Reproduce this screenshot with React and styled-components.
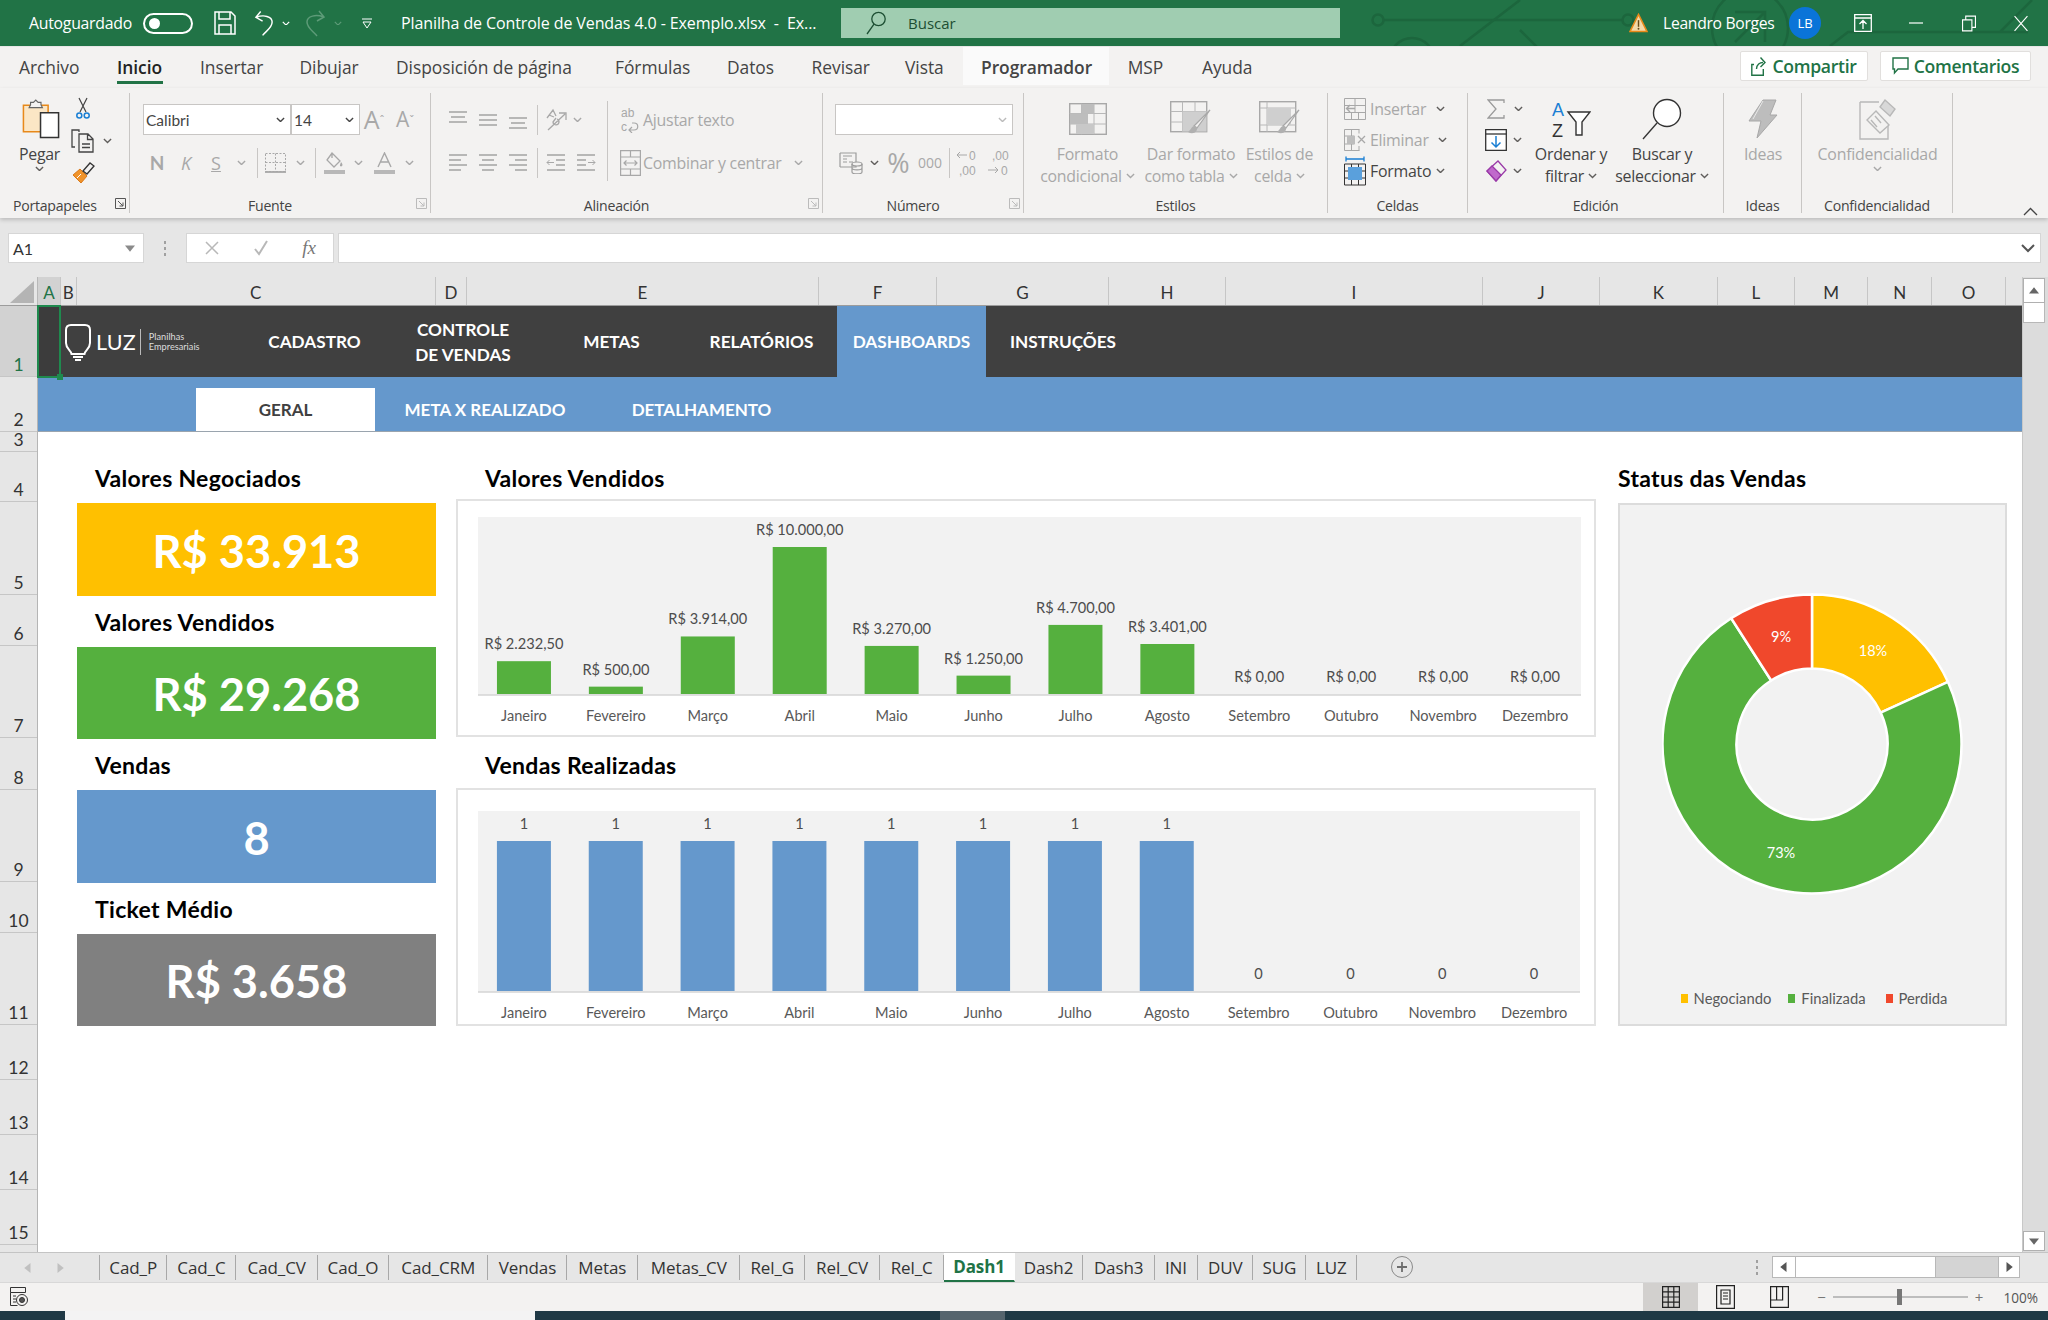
import React from 'react';
import styled, { createGlobalStyle } from 'styled-components';

const UI = `"Open Sans","Noto Sans",sans-serif`;
const CAL = `Lato,"Liberation Sans",sans-serif`;
const LIB = `"Liberation Sans",sans-serif`;
const GR = '#a8a8a8';
const DK = '#444';

const Global = createGlobalStyle`
  html,body{margin:0;padding:0;width:2048px;height:1320px;overflow:hidden;background:#fff;}
  *{box-sizing:border-box;}
`;
const Page = styled.div`width:2048px;height:1320px;display:flex;flex-direction:column;font-family:${UI};overflow:hidden;`;

/* ---------- generic slots ---------- */
const Slot = styled.div`
  flex:none;width:${p=>p.$w}px;margin-left:${p=>p.$ml||0}px;display:flex;align-items:center;justify-content:center;
  height:100%;white-space:nowrap;
`;
const Sep = styled.div`flex:none;width:1px;height:${p=>p.$h||26}px;background:#c8c6c4;margin:0 ${p=>p.$m||0}px;`;

/* ---------- title bar ---------- */
const TitleBar = styled.div`position:relative;flex:none;height:46px;background:#217346;display:flex;align-items:center;color:#fff;padding-left:29px;font-size:15px;`;
const Circuit = styled.svg`position:absolute;left:1360px;top:0;`;
const TitleRow = styled.div`position:relative;display:flex;align-items:center;height:100%;`;
const AutoLabel = styled.div`flex:none;width:114px;font-size:15.8px;letter-spacing:-.25px;white-space:nowrap;`;
const Toggle = styled.div`flex:none;width:50px;height:21px;border:2px solid #fff;border-radius:11px;display:flex;align-items:center;padding-left:4px;`;
const ToggleDot = styled.div`width:11px;height:11px;border-radius:50%;background:#fff;`;
const DocTitle = styled.div`flex:none;width:414px;margin-left:10px;font-size:16px;white-space:nowrap;letter-spacing:-.1px;`;
const SearchBox = styled.div`flex:none;width:499px;height:30px;margin-left:26px;background:#a0cdb1;display:flex;align-items:center;padding-left:25px;color:#1d4f33;font-size:15px;gap:22px;`;
const UserName = styled.div`flex:none;width:112px;margin-left:15px;font-size:15.7px;white-space:nowrap;letter-spacing:-.3px;`;
const Avatar = styled.div`flex:none;width:32px;height:32px;border-radius:50%;background:#0a74d8;margin-left:14px;display:flex;align-items:center;justify-content:center;font-size:13px;color:#fff;`;

/* ---------- ribbon tabs ---------- */
const TabsBar = styled.div`flex:none;height:42px;background:#f3f2f1;border-top:1px solid #e6e6e6;display:flex;align-items:flex-start;padding-left:19px;`;
const RibbonTab = styled.div`
  flex:none;position:relative;width:${p=>p.$w}px;height:38px;padding-left:${p=>p.$pl||0}px;font-size:17.4px;line-height:40px;color:${p=>p.$on?'#222':'#444'};
  font-weight:${p=>p.$on||p.$sel?600:400};background:${p=>p.$sel?'#fafafa':'transparent'};white-space:nowrap;letter-spacing:-.05px;
`;
const TabLine = styled.div`position:absolute;left:0;top:34px;width:46px;height:3px;background:#217346;`;
const ShareRow = styled.div`margin-left:auto;display:flex;gap:12px;padding:4px 17px 0 0;`;
const ShareBtn = styled.div`width:${p=>p.$w}px;height:30px;background:#fff;border:1px solid #e1dfdd;border-radius:2px;display:flex;align-items:center;justify-content:center;gap:5px;color:#217346;font-size:17.6px;font-weight:600;letter-spacing:-.3px;white-space:nowrap;`;

/* ---------- ribbon ---------- */
const Ribbon = styled.div`position:relative;z-index:2;flex:none;height:130px;background:#f3f2f1;display:flex;padding-top:5px;box-shadow:0 2px 4px rgba(0,0,0,.18);`;
const Group = styled.div`flex:none;width:${p=>p.$w}px;height:120px;border-right:1px solid #c8c6c4;display:flex;flex-direction:column;`;
const GroupBody = styled.div`flex:1;display:flex;min-height:0;padding-left:${p=>p.$pl||0}px;`;
const GroupLabel = styled.div`
  flex:none;height:24px;padding-top:9px;position:relative;text-align:${p=>p.$left?'left':'center'};padding-left:${p=>p.$left?13:0}px;padding-right:${p=>p.$lp?20:0}px;
  font-size:14.1px;line-height:15px;color:#444;letter-spacing:-.25px;white-space:nowrap;
`;
const Launcher = styled.svg`position:absolute;right:3px;top:9px;`;
const Col = styled.div`display:flex;flex-direction:column;flex:none;width:${p=>p.$w?p.$w+'px':'auto'};padding-top:${p=>p.$pt||0}px;`;
const ToolRow = styled.div`display:flex;align-items:center;flex:none;height:${p=>p.$h||31}px;margin-bottom:${p=>p.$mb||0}px;`;
const PasteCol = styled.div`flex:none;width:71px;padding-left:8px;display:flex;flex-direction:column;align-items:center;`;
const LargeBtn = styled.div`flex:none;width:${p=>p.$w}px;display:flex;flex-direction:column;align-items:center;color:${p=>p.$dim?GR:DK};font-size:15.9px;line-height:21.5px;letter-spacing:-.25px;white-space:nowrap;`;
const LargeIcon = styled.div`flex:none;height:51px;display:flex;align-items:center;justify-content:center;margin-left:${p=>p.$ml||0}px;`;
const TextRow = styled.div`display:flex;align-items:center;gap:4px;`;
const DimText = styled.span`font-size:15.9px;color:${p=>p.$on?DK:GR};letter-spacing:-.25px;white-space:nowrap;`;
const SelectBox = styled.div`flex:none;width:${p=>p.$w}px;height:31px;background:#fff;border:1px solid #c8c6c4;display:flex;align-items:center;justify-content:space-between;padding:0 5px 0 2px;font-family:${CAL};font-size:15.5px;color:#444;`;
const BigA = styled.span`font-size:${p=>p.$s}px;color:${GR};font-weight:${p=>p.$b?700:400};font-style:${p=>p.$i?'italic':'normal'};text-decoration:${p=>p.$u?'underline':'none'};font-family:${p=>p.$c?CAL:UI};line-height:1;`;
const VDiv = styled.div`flex:none;width:1px;height:80px;background:#c8c6c4;margin:8px 0 0 0;`;
const AlignLeft = styled.div`flex:none;width:164px;`;
const AlignRight = styled.div`flex:none;padding-left:9px;`;
const Collapse = styled.div`margin-left:auto;padding:106px 10px 0 0;`;

/* ---------- formula bar ---------- */
const FormulaBar = styled.div`flex:none;height:59px;background:#e6e6e6;display:flex;align-items:flex-start;padding:15px 7px 0 8px;`;
const NameBox = styled.div`flex:none;width:136px;height:30px;background:#fff;border:1px solid #d6d6d6;display:flex;align-items:center;justify-content:space-between;padding:0 8px 0 4px;font-family:${CAL};font-size:16px;color:#333;`;
const Dots = styled.div`flex:none;width:42px;display:flex;flex-direction:column;align-items:center;gap:3px;padding-top:8px;`;
const Dot = styled.div`width:2px;height:3px;background:#a0a0a0;`;
const FxBox = styled.div`flex:none;width:148px;height:30px;background:#fff;border:1px solid #d6d6d6;display:flex;align-items:center;`;
const FxText = styled.span`font-family:"Liberation Serif",serif;font-style:italic;font-size:19px;color:#777;`;
const FormulaInput = styled.div`flex:1;height:30px;margin-left:4px;background:#fff;border:1px solid #d6d6d6;display:flex;align-items:center;justify-content:flex-end;padding-right:5px;`;

/* ---------- sheet ---------- */
const Sheet = styled.div`flex:1;min-height:0;display:flex;background:#fff;`;
const SheetMain = styled.div`flex:none;width:2022px;display:flex;flex-direction:column;`;
const ColHeader = styled.div`flex:none;height:29px;display:flex;background:#e6e6e6;border-bottom:1px solid #9c9c9c;`;
const Corner = styled.div`flex:none;width:38px;height:100%;display:flex;align-items:flex-end;justify-content:flex-end;padding:0 3px 2px 0;border-right:1px solid #b8b8b8;`;
const ColCell = styled.div`
  flex:none;width:${p=>p.$w}px;height:100%;border-right:1px solid #c6c6c6;display:flex;align-items:flex-end;justify-content:center;
  font-family:${CAL};font-size:17px;line-height:24px;color:${p=>p.$on?'#217346':'#333'};background:${p=>p.$on?'#d2d2d2':'transparent'};
`;
const SheetBody = styled.div`flex:1;min-height:0;display:flex;position:relative;`;
const RowHeader = styled.div`flex:none;width:38px;background:#e6e6e6;border-right:1px solid #b5b5b5;overflow:hidden;`;
const RowCell = styled.div`
  height:${p=>p.$h}px;border-bottom:1px solid #c6c6c6;display:flex;align-items:flex-end;justify-content:center;padding-bottom:2px;
  font-family:${CAL};font-size:17.5px;line-height:18px;color:${p=>p.$on?'#217346':'#333'};background:${p=>p.$on?'#d2d2d2':'transparent'};
`;
const Content = styled.div`flex:1;min-width:0;display:flex;flex-direction:column;`;
const SelectedCell = styled.div`position:absolute;left:37px;top:-1px;width:24px;height:73px;border:2px solid #1f8a4e;background:rgba(0,0,0,.06);`;
const Handle = styled.div`position:absolute;right:-4px;bottom:-4px;width:6px;height:6px;background:#1f8a4e;`;

const Nav = styled.div`flex:none;height:71px;background:#404040;display:flex;color:#fff;font-family:${CAL};font-weight:700;font-size:17.2px;`;
const LogoSlot = styled.div`flex:none;width:215px;display:flex;align-items:center;padding-left:27px;`;
const LogoLuz = styled.span`font-weight:400;font-size:21.5px;margin-left:5px;letter-spacing:.2px;`;
const LogoBar = styled.div`width:1px;height:26px;background:#bbb;margin:0 8px 0 4px;`;
const LogoSmall = styled.div`font-weight:400;font-size:9.2px;line-height:9.5px;color:#ddd;`;
const NavItem = styled.div`
  flex:none;width:${p=>p.$w}px;margin-left:${p=>p.$ml||0}px;display:flex;align-items:center;justify-content:center;text-align:center;line-height:25px;
  background:${p=>p.$on?'#6598cc':'transparent'};white-space:pre-line;
`;
const SubNav = styled.div`flex:none;height:55px;background:#6598cc;border-bottom:1px solid #9aa4ae;display:flex;align-items:flex-end;padding-left:158px;color:#fff;font-family:${CAL};font-weight:700;font-size:17px;`;
const SubTab = styled.div`flex:none;width:${p=>p.$w}px;height:43px;display:flex;align-items:center;justify-content:center;background:${p=>p.$on?'#fff':'transparent'};color:${p=>p.$on?'#404040':'#fff'};`;

const Dash = styled.div`flex:1;display:flex;padding:20px 0 0 39px;align-items:flex-start;`;
const LeftCol = styled.div`flex:none;width:359px;display:flex;flex-direction:column;`;
const MidCol = styled.div`flex:none;width:1140px;margin-left:20px;display:flex;flex-direction:column;`;
const RightCol = styled.div`flex:none;width:389px;margin-left:22px;display:flex;flex-direction:column;`;
const Heading = styled.div`
  height:${p=>p.$h}px;padding-left:${p=>p.$pl||0}px;padding-top:${p=>p.$pt||0}px;font-family:${CAL};font-weight:700;font-size:23px;line-height:30px;color:#000;white-space:nowrap;letter-spacing:.3px;
`;
const Kpi = styled.div`height:92.5px;padding-top:2px;background:${p=>p.$c};display:flex;align-items:center;justify-content:center;color:#fff;font-family:${CAL};font-weight:700;font-size:45.2px;`;
const ChartCard = styled.div`height:${p=>p.$h}px;border:2px solid #e2e2e2;background:#fff;padding:${p=>p.$pt}px 0 0 20px;`;
const PlotSvg = styled.svg`display:block;font-family:${CAL};`;
const StatusPanel = styled.div`height:523px;background:#f2f2f2;border:2px solid #dcdcdc;display:flex;flex-direction:column;align-items:center;padding-top:88px;`;
const Legend = styled.div`margin-top:auto;margin-bottom:17px;margin-left:3px;display:flex;align-items:center;font-family:${CAL};font-size:14.8px;color:#595959;white-space:nowrap;`;
const LegendItem = styled.div`display:flex;align-items:center;gap:6px;margin-right:${p=>p.$mr||0}px;`;
const LegendSwatch = styled.div`width:7px;height:9px;background:${p=>p.$c};`;

const VScroll = styled.div`flex:none;width:26px;background:#dcdcdc;border-left:1px solid #c8c8c8;display:flex;flex-direction:column;padding:1px 3px 1px 0;`;
const ScrollBtn = styled.div`flex:none;height:${p=>p.$h||25}px;background:#fff;border:1px solid #b0b0b0;display:flex;align-items:center;justify-content:center;margin-top:${p=>p.$auto?'auto':'0'};`;
const ScrollThumb = styled.div`flex:none;height:20px;background:#fff;border:1px solid #b8b8b8;border-top:none;`;

/* ---------- sheet tabs / status ---------- */
const SheetTabs = styled.div`flex:none;height:30px;background:#e6e6e6;border-top:1px solid #c4c4c4;display:flex;align-items:flex-start;`;
const TabNav = styled.div`flex:none;width:99px;height:100%;display:flex;align-items:center;gap:22px;padding-left:23px;`;
const SheetTab = styled.div`
  flex:none;width:${p=>p.$w}px;height:${p=>p.$on?29:25}px;margin-top:${p=>p.$on?0:2}px;border-right:1px solid ${p=>p.$on?'transparent':'#a8a8a8'};display:flex;align-items:center;justify-content:center;
  font-size:17px;letter-spacing:-.1px;color:${p=>p.$on?'#217346':'#333'};font-weight:${p=>p.$on?700:400};background:${p=>p.$on?'#fff':'transparent'};border-bottom:${p=>p.$on?'2px solid #217346':'none'};
  border-left:${p=>p.$first?'1px solid #a8a8a8':'none'};white-space:nowrap;
`;
const AddSheet = styled.div`flex:none;width:22px;height:22px;border-radius:50%;border:1.5px solid #8a8a8a;margin:3px 0 0 34px;display:flex;align-items:center;justify-content:center;`;
const HScrollWrap = styled.div`margin-left:auto;display:flex;align-items:flex-start;padding:3px 28px 0 0;`;
const HDots = styled.div`display:flex;flex-direction:column;gap:3px;padding:4px 0 0 0;margin-right:14px;`;
const HScroll = styled.div`width:248px;height:22px;background:#d4d4d4;border:1px solid #b8b8b8;display:flex;`;
const HArrow = styled.div`flex:none;width:${p=>p.$w}px;background:#fff;display:flex;align-items:center;justify-content:center;margin-left:${p=>p.$auto?'auto':'0'};border-${p=>p.$auto?'left':'right'}:1px solid #b8b8b8;`;
const HThumb = styled.div`width:140px;background:#fff;border-right:1px solid #b8b8b8;`;

const StatusBar = styled.div`flex:none;height:29px;background:#f3f2f1;border-top:1px solid #d8d8d8;display:flex;align-items:center;padding-left:10px;`;
const StatusRight = styled.div`margin-left:auto;height:100%;display:flex;align-items:center;`;
const ViewBtn = styled.div`flex:none;width:${p=>p.$w}px;height:100%;display:flex;align-items:center;justify-content:center;background:${p=>p.$on?'#d2d0ce':'transparent'};`;
const ZoomTrack = styled.div`position:relative;width:135px;height:2px;background:#bdbdbd;margin:0 7px;`;
const ZoomKnob = styled.div`position:absolute;left:64px;top:-7px;width:5px;height:16px;background:#777;`;
const ZoomSign = styled.span`font-size:15px;color:#777;margin-left:${p=>p.$ml||0}px;`;
const ZoomPct = styled.span`font-size:13.6px;color:#555;margin:0 10px 0 20px;`;
const Taskbar = styled.div`flex:none;height:9px;background:#1f3945;display:flex;`;
const TaskItem = styled.div`flex:none;width:${p=>p.$w}px;margin-left:${p=>p.$ml}px;background:${p=>p.$c};`;

/* ---------- icons ---------- */
const Chev = ({c='#605e5c',s=9})=>(<svg width={s} height={s*.62} viewBox="0 0 10 6"><path d="M1 1l4 4 4-4" fill="none" stroke={c} strokeWidth="1.5"/></svg>);
const Ln = ({x1,x2,y,c=GR,sw=1.6})=><line x1={x1} x2={x2} y1={y} y2={y} stroke={c} strokeWidth={sw}/>;
const LaunchIcon = ({c='#777'})=>(<Launcher width="11" height="11" viewBox="0 0 11 11"><path d="M.5 10.5V.5h10v10zM3 3l5 5M8 4.5V8H4.5" fill="none" stroke={c}/></Launcher>);
const AlignV = ({pos})=>{const y=pos==='t'?[2,7,12]:pos==='m'?[5,10,15]:[8,13,18];return(<svg width="20" height="20" viewBox="0 0 20 20">{y.map((v,i)=><Ln key={i} x1={i===1&&pos!=='m'?3:1} x2={i===1&&pos!=='m'?17:19} y={v}/>)}</svg>);};
const AlignH = ({pos})=>{const r=[[1,19],[1,13],[1,19],[1,13]];const y=[2,7,12,17];return(<svg width="20" height="20" viewBox="0 0 20 20">{y.map((v,i)=>{let a=r[i][0],b=r[i][1];if(pos==='c'&&i%2){a=4;b=16;}if(pos==='r'&&i%2){a=7;b=19;}return <Ln key={i} x1={a} x2={b} y={v}/>;})}</svg>);};
const Indent = ({dir})=>(<svg width="20" height="20" viewBox="0 0 20 20"><Ln x1={1} x2={19} y={2}/><Ln x1={dir==='l'?10:1} x2={dir==='l'?19:10} y={7}/><Ln x1={dir==='l'?10:1} x2={dir==='l'?19:10} y={12}/><Ln x1={1} x2={19} y={17}/><path d={dir==='l'?'M8 9.5H1M3.5 7L1 9.5 3.5 12':'M12 9.5h7M16.5 7L19 9.5 16.5 12'} fill="none" stroke={GR} strokeWidth="1"/></svg>);
const Icons = {
  Save:()=>(<svg width="22" height="24" viewBox="0 0 22 24" fill="none" stroke="#fff" strokeWidth="1.5"><path d="M1 1h16l4 4v18H1zM5 1v7h11V1M5 23v-9h12v9"/></svg>),
  Undo:()=>(<svg width="22" height="28" viewBox="0 0 22 28" fill="none" stroke="#fff" strokeWidth="1.5"><path d="M7 2L2 8l7 4M2.5 8C10 5 19 7 19 13c0 6-6 9-10 14"/></svg>),
  Redo:()=>(<svg width="22" height="28" viewBox="0 0 22 28" fill="none" stroke="#5d9b78" strokeWidth="1.5"><path d="M15 2l5 6-7 4M19.5 8C12 5 3 7 3 13c0 6 6 9 10 14"/></svg>),
  Custom:()=>(<svg width="10" height="11" viewBox="0 0 10 11"><path d="M0 1h10" stroke="#fff"/><path d="M1 4l4 6 4-6z" fill="none" stroke="#fff"/></svg>),
  Search:()=>(<svg width="20" height="24" viewBox="0 0 20 24" fill="none" stroke="#1d4f33" strokeWidth="1.3"><circle cx="12.5" cy="8" r="6.7"/><path d="M8 13.2L1 23"/></svg>),
  Warn:()=>(<svg width="20" height="20" viewBox="0 0 20 20"><path d="M10 1l9 18H1z" fill="#f5d9a8" stroke="#e8891a" strokeWidth="1.6"/><path d="M10 7v7" stroke="#6b4b1a" strokeWidth="1.5"/><circle cx="10" cy="16" r="1" fill="#6b4b1a"/></svg>),
  Display:()=>(<svg width="18" height="18" viewBox="0 0 18 18" fill="none" stroke="#fff" strokeWidth="1.3"><path d="M.7.7h16.6v16.6H.7zM.7 4h16.6M9 15V7M5.5 10L9 6.5l3.5 3.5"/></svg>),
  Min:()=>(<svg width="14" height="2" viewBox="0 0 14 2"><path d="M0 1h14" stroke="#fff" strokeWidth="1.2"/></svg>),
  Restore:()=>(<svg width="15" height="17" viewBox="0 0 15 17" fill="none" stroke="#fff" strokeWidth="1.2"><path d="M.6 4.6h10v11.8H.6zM4 4.5V.6h10.4v12h-3.6"/></svg>),
  Close:()=>(<svg width="15" height="17" viewBox="0 0 15 17" fill="none" stroke="#fff" strokeWidth="1.2"><path d="M.6.6l13.8 15.8M14.4.6L.6 16.4"/></svg>),
  Share:()=>(<svg width="16" height="20" viewBox="0 0 16 20" fill="none" stroke="#217346" strokeWidth="1.4"><path d="M3 8.5H.8v10.7h11.5V13M5.5 13c0-4.5 3.5-6.5 6.5-6.5M9.5 1.5l4.5 5-4.5 4.5"/></svg>),
  Comment:()=>(<svg width="17" height="18" viewBox="0 0 17 18" fill="none" stroke="#217346" strokeWidth="1.4"><path d="M1 1h15v11H6l-3.5 4v-4H1z"/></svg>),
  Paste:()=>(<svg width="38" height="42" viewBox="0 0 40 42"><path d="M1.5 6.5h26v28h-26z" fill="#fbe6c5" stroke="#e8891a" strokeWidth="1.6"/><path d="M9 6V3.5h3L14.5 1l2.5 2.5h3V6l1.5 3h-14z" fill="#f3f2f1" stroke="#666" strokeWidth="1.2"/><path d="M19.5 14.5h19v26h-19z" fill="#fff" stroke="#333" strokeWidth="1.6"/></svg>),
  Scissors:()=>(<svg width="14" height="22" viewBox="0 0 14 22"><path d="M3 1l7 14M11 1L4 15" stroke="#444" strokeWidth="1.2" fill="none"/><circle cx="3.3" cy="18.5" r="2.5" fill="none" stroke="#1a7fd4" strokeWidth="1.5"/><circle cx="10.7" cy="18.5" r="2.5" fill="none" stroke="#1a7fd4" strokeWidth="1.5"/></svg>),
  Copy:()=>(<svg width="24" height="24" viewBox="0 0 24 24" fill="none" stroke="#444" strokeWidth="1.3"><path d="M8 3V1H1v17h3"/><path d="M8 5h9l5 5v13H8zM16.5 5v5.5H22M11 15h8M11 18.5h8"/></svg>),
  Brush:()=>(<svg width="23" height="22" viewBox="0 0 23 22"><path d="M8 7L1 13l8 8 6-7z" fill="#f0932a" stroke="#d9791a" strokeWidth="1"/><path d="M5 16l4-4" stroke="#fff" strokeWidth="1"/><path d="M11 9l7-8 4 3-7 8z" fill="#f3f2f1" stroke="#333" strokeWidth="1.3"/></svg>),
  Borders:()=>(<svg width="21" height="20" viewBox="0 0 21 20" fill="none" stroke={GR}><path d="M.5 .5h20v18h-20zM10.5 .5v18M.5 9.5h20" strokeDasharray="2 1.5"/><path d="M0 19h21" strokeWidth="1.8"/></svg>),
  Fill:()=>(<svg width="21" height="22" viewBox="0 0 21 22"><path d="M8 1l8 8-6 6-7-7zM8 1v5" fill="none" stroke={GR} strokeWidth="1.3"/><path d="M17 10c1.5 2 2 3 1 4s-2.5 0-2-1z" fill={GR}/><rect y="18" width="21" height="4" fill="#b8b8b8"/></svg>),
  FontColor:()=>(<svg width="21" height="22" viewBox="0 0 21 22"><path d="M4 15L10.5 1 17 15M6.5 10h8" fill="none" stroke={GR} strokeWidth="1.4"/><rect y="18" width="21" height="4" fill="#b8b8b8"/></svg>),
  Orient:()=>(<svg width="22" height="24" viewBox="0 0 22 24" fill="none" stroke={GR} strokeWidth="1.3"><path d="M2 10l6-8 3 6M4 7l5 2M12 11a3 3 0 1 1-4 3l3-4M3 22L20 6M14 5h7v7"/></svg>),
  Wrap:()=>(<svg width="20" height="26" viewBox="0 0 20 26" fill="none" stroke={GR} strokeWidth="1.2"><text x="1" y="10" fontFamily={LIB} fontSize="12" fill={GR} stroke="none">ab</text><text x="1" y="24" fontFamily={LIB} fontSize="12" fill={GR} stroke="none">c</text><path d="M9 23h5c5 0 5-7 0-7h-2M12 20l-3 3 3 3"/></svg>),
  Merge:()=>(<svg width="21" height="26" viewBox="0 0 21 26" fill="none" stroke={GR} strokeWidth="1.2"><path d="M.6.6h19.8v24.8H.6zM.6 7h19.8M.6 19h19.8M10.5.6V7M10.5 19v6.4M4 13h13M6.5 10.5L4 13l2.5 2.5M14.5 10.5L17 13l-2.5 2.5"/></svg>),
  Accounting:()=>(<svg width="24" height="22" viewBox="0 0 24 22" fill="none" stroke="#9c9c9c" strokeWidth="1.2"><path d="M1 1h16v14H1M1 1v14M4 4h9M4 7h4M4 10h4M10 10h4"/><ellipse cx="18" cy="12" rx="5" ry="2" fill="#f3f2f1"/><path d="M13 12v8c0 2.5 10 2.5 10 0v-8M13 16c0 2.5 10 2.5 10 0"/></svg>),
  DecInc:()=>(<svg width="25" height="32" viewBox="0 0 25 32" fill={GR}><path d="M11 8H1M4 5L1 8l3 3" fill="none" stroke={GR}/><text x="13" y="13" fontSize="12" fontFamily={LIB}>0</text><text x="3" y="28" fontSize="12" fontFamily={LIB}>,00</text></svg>),
  DecDec:()=>(<svg width="25" height="32" viewBox="0 0 25 32" fill={GR}><text x="5" y="13" fontSize="12" fontFamily={LIB}>,00</text><path d="M1 23h10M8 20l3 3-3 3" fill="none" stroke={GR}/><text x="14" y="28" fontSize="12" fontFamily={LIB}>0</text></svg>),
  CondFmt:()=>(<svg width="38" height="32" viewBox="0 0 38 32"><rect x=".7" y=".7" width="36.6" height="30.6" fill="#f3f2f1" stroke="#a8a8a8" strokeWidth="1.4"/><path d="M.7 10.5h36.6M.7 21h36.6M12.5.7v30.6M25 .7v30.6" stroke="#b8b8b8" fill="none"/><rect x="12.5" y="1" width="12.5" height="9.5" fill="#bdbdbd"/><rect x="1" y="10.5" width="18" height="10.5" fill="#bdbdbd"/><rect x="7" y="21" width="18" height="10" fill="#c8c8c8"/></svg>),
  TableFmt:()=>(<svg width="42" height="36" viewBox="0 0 42 36"><rect x=".7" y=".7" width="36" height="30" fill="#f3f2f1" stroke="#a8a8a8" strokeWidth="1.4"/><path d="M.7 10.5h36M.7 21h36M12.5.7v30M25 .7v30" stroke="#b8b8b8" fill="none"/><rect x="12.5" y="10.5" width="24" height="20" fill="#cfcfcf"/><path d="M40 9L27 27l-3-2z" fill="#f3f2f1" stroke="#a8a8a8" strokeWidth="1.2"/><path d="M24 25c-3 1-3 4-6 6 5 3 10 0 9-5z" fill="#b0b0b0"/></svg>),
  CellFmt:()=>(<svg width="42" height="36" viewBox="0 0 42 36"><rect x=".7" y=".7" width="36" height="30" fill="#f3f2f1" stroke="#a8a8a8" strokeWidth="1.4"/><path d="M.7 7h36M.7 24h36M8 .7v30" stroke="#b8b8b8" fill="none"/><rect x="8" y="7" width="24" height="17" fill="#cfcfcf"/><path d="M40 9L27 27l-3-2z" fill="#f3f2f1" stroke="#a8a8a8" strokeWidth="1.2"/><path d="M24 25c-3 1-3 4-6 6 5 3 10 0 9-5z" fill="#b0b0b0"/></svg>),
  CellIns:()=>(<svg width="22" height="22" viewBox="0 0 22 22" fill="none" stroke={GR}><path d="M.5 .5h21v21H.5zM.5 7.5h21M.5 14.5h21M7.5 14.5v7M14.5 14.5v7"/><path d="M11 10.5H3M6 7L2.5 10.5 6 14" strokeWidth="1.4"/><path d="M11 .5v14"/></svg>),
  CellDel:()=>(<svg width="22" height="24" viewBox="0 0 22 24" fill="none" stroke={GR}><path d="M.5 1.5h15M.5 22.5h15M.5 1.5v21M15 1.5v4M15 18v4.5M.5 8h10M.5 16h10M7.5 1.5V8M7.5 16v6.5"/><rect x="3" y="8" width="8" height="8" fill="#bdbdbd" stroke="none"/><path d="M14 8l7 7M21 8l-7 7" strokeWidth="1.3"/></svg>),
  CellFormat:()=>(<svg width="22" height="30" viewBox="0 0 22 30" fill="none" stroke="#333"><path d="M.5 8h21v21H.5zM.5 15h21M.5 22h21M7.5 8v21M14.5 8v21"/><rect x="4" y="11" width="14" height="13" fill="#5aa0dc" stroke="none"/><path d="M2 3h18M2 .5v5M20 .5v5" stroke="#1a7fd4" strokeWidth="1.3"/></svg>),
  Sum:()=>(<svg width="18" height="20" viewBox="0 0 18 20" fill="none" stroke="#9a9a9a" strokeWidth="1.3"><path d="M17 4V1H1l8 9-8 9h16v-3"/></svg>),
  FillDown:()=>(<svg width="22" height="22" viewBox="0 0 22 22" fill="#fff" stroke="#333" strokeWidth="1.3"><path d="M.7.7h20.6v20.6H.7z"/><path d="M.7 5h20.6"/><path d="M11 7v11M6.5 13.5L11 18l4.5-4.5" fill="none" stroke="#1a7fd4" strokeWidth="1.5"/></svg>),
  Eraser:()=>(<svg width="22" height="22" viewBox="0 0 22 22"><path d="M13 1l8 9-10 11-9-10z" fill="#f3f2f1" stroke="#9a3aa8" strokeWidth="1.3"/><path d="M7 6l9 9-5 6-9-10z" fill="#c069cc" stroke="#9a3aa8" strokeWidth="1.3"/></svg>),
  Sort:()=>(<svg width="40" height="42" viewBox="0 0 40 42"><text x="1" y="18" fontFamily={LIB} fontSize="18" fill="#1a7fd4">A</text><text x="1" y="39" fontFamily={LIB} fontSize="18" fill="#333">Z</text><path d="M17 14h22l-8 10v13h-6V24z" fill="#fff" stroke="#333" strokeWidth="1.4"/></svg>),
  Find:()=>(<svg width="42" height="42" viewBox="0 0 42 42"><circle cx="26" cy="15" r="13.5" fill="#fff" stroke="#333" strokeWidth="1.4"/><path d="M16 25L2 41" stroke="#333" strokeWidth="1.4"/></svg>),
  Bolt:()=>(<svg width="30" height="40" viewBox="0 0 30 40"><path d="M15 1h13l-6 15h7L9 39l4-17H1z" fill="#bdbdbd" stroke="#a8a8a8"/><path d="M15 2L5 20" stroke="#e8e8e8" strokeWidth="1"/></svg>),
  Conf:()=>(<svg width="38" height="42" viewBox="0 0 38 42" fill="none" stroke="#b8b8b8" strokeWidth="1.4"><path d="M1 4h19M1 4v37h28V26"/><path d="M26 2l10 9-5 7-10-9z" fill="#d8d8d8"/><path d="M8 22l9-9 13 14-9 8z" fill="#f3f2f1"/><path d="M12 22l6 7M16 18l6 7"/></svg>),
};

const Macro = ()=>(<svg width="18" height="20" viewBox="0 0 18 20" fill="none" stroke="#333"><path d="M.5.5h15v5H.5zM.5 5.5v13h7M3 9h3M3 12h3M3 15h3"/><circle cx="12" cy="13" r="5.5" fill="#f3f2f1"/><circle cx="12" cy="13" r="2.5" fill="#555"/></svg>);
const GridView = ()=>(<svg width="18" height="22" viewBox="0 0 18 22" fill="none" stroke="#222" strokeWidth="1.2"><path d="M.6.6h16.8v20.8H.6zM.6 5.8h16.8M.6 11h16.8M.6 16.2h16.8M6.2.6v20.8M11.8.6v20.8"/></svg>);
const PageView = ()=>(<svg width="19" height="24" viewBox="0 0 19 24" fill="none" stroke="#222" strokeWidth="1.2"><path d="M.6.6h17.8v22.8H.6zM5 5h9v14H5zM7 8h5M7 11h5M7 14h5"/></svg>);
const BreakView = ()=>(<svg width="19" height="22" viewBox="0 0 19 22" fill="none" stroke="#222" strokeWidth="1.2"><path d="M.6.6h17.8v20.8H.6zM.6 14h12V.6M6.6.6v13.4"/></svg>);
const Tri = ({d,c='#777',s=8})=>(<svg width={s} height={s} viewBox="0 0 8 8"><path d={d==='u'?'M0 6h8L4 1z':d==='d'?'M0 2h8L4 7z':d==='l'?'M6 0v8L1 4z':'M2 0v8l5-4z'} fill={c}/></svg>);

const Bulb = ()=>(<svg width="26" height="38" viewBox="0 0 26 38" fill="none" stroke="#fff" strokeWidth="2"><path d="M6 2h14c3 0 5 2 5 5v13c0 6-5 7-5.5 11h-13C6 27 1 26 1 20V7c0-3 2-5 5-5z"/><path d="M8 34h10M10 37h6"/></svg>);

const Circ = ()=>(
  <Circuit width="688" height="46" viewBox="0 0 688 46" fill="none" stroke="#1c663d" strokeWidth="2.5">
    <path d="M24 20h238M30 60a22 22 0 0 1 44 0M86 60a8 8 0 0 1 14 0"/>
    <circle cx="18" cy="20" r="5.5"/><circle cx="268" cy="20" r="5.5"/>
    <path d="M100 46l60-46M160 30l30 30"/>
    <circle cx="390" cy="28" r="38"/><path d="M375 12h30v30M405 12l-30 30"/>
    <path d="M470 46l18-14h180M640 32L672 0"/>
  </Circuit>
);

/* ---------- data ---------- */
const MONTHS=['Janeiro','Fevereiro','Março','Abril','Maio','Junho','Julho','Agosto','Setembro','Outubro','Novembro','Dezembro'];
const SOLD=[2232.5,500,3914,10000,3270,1250,4700,3401,0,0,0,0];
const SOLDL=['R$ 2.232,50','R$ 500,00','R$ 3.914,00','R$ 10.000,00','R$ 3.270,00','R$ 1.250,00','R$ 4.700,00','R$ 3.401,00','R$ 0,00','R$ 0,00','R$ 0,00','R$ 0,00'];
const COUNT=[1,1,1,1,1,1,1,1,0,0,0,0];
const COLS=[['A',23,1],['B',15.5],['C',359.5],['D',31],['E',352],['F',118],['G',172],['H',117],['I',257],['J',117],['K',117.6],['L',77.4],['M',73.5],['N',63.5],['O',74]];
const ROWS=[[1,71,1],[2,55],[3,20],[4,50],[5,93],[6,51],[7,92],[8,52],[9,92],[10,51],[11,92],[12,55],[13,55],[14,55],[15,55]];
const TABS=[['Archivo',98],['Inicio',83,1],['Insertar',99.5],['Dibujar',96.5],['Disposición de página',219],['Fórmulas',112],['Datos',84.6],['Revisar',93.4],['Vista',58]];
const SHEETS=[['Cad_P',68.4],['Cad_C',69],['Cad_CV',81.6],['Cad_O',71],['Cad_CRM',99.5],['Vendas',79],['Metas',70.6],['Metas_CV',102.4],['Rel_G',64.6],['Rel_CV',75],['Rel_C',64.3],['Dash1',70.4,1],['Dash2',68.6],['Dash3',71.6],['INI',43],['DUV',55.5],['SUG',53],['LUZ',50.6]];

const Chart=({w,plotH,values,labels,max,color,barMaxH,sz=14.6})=>{
  const step=w/12;
  return(
    <PlotSvg width={w} height={plotH+36} viewBox={`0 0 ${w} ${plotH+36}`}>
      <rect width={w} height={plotH} fill="#f2f2f2"/>
      <line x1="0" x2={w} y1={plotH} y2={plotH} stroke="#d4d4d4" strokeWidth="1.5"/>
      {values.map((v,i)=>{
        const cx=step*(i+.5), h=v/max*barMaxH;
        return(<g key={i}>
          {h>0&&<rect x={cx-27} y={plotH-h-1} width="54" height={h} fill={color}/>}
          <text x={cx} y={plotH-h-13} textAnchor="middle" fontSize={sz} fill="#4d4d4d">{labels[i]}</text>
          <text x={cx} y={plotH+26} textAnchor="middle" fontSize={sz} fill="#595959">{MONTHS[i]}</text>
        </g>);
      })}
    </PlotSvg>
  );
};

const arc=(cx,cy,R,r,a0,a1)=>{
  const p=(rad,a)=>[cx+rad*Math.sin(a),cy-rad*Math.cos(a)];
  const [x0,y0]=p(R,a0),[x1,y1]=p(R,a1),[x2,y2]=p(r,a1),[x3,y3]=p(r,a0);
  const lg=a1-a0>Math.PI?1:0;
  return `M${x0} ${y0}A${R} ${R} 0 ${lg} 1 ${x1} ${y1}L${x2} ${y2}A${r} ${r} 0 ${lg} 0 ${x3} ${y3}Z`;
};
const Donut=()=>{
  const parts=[[2/11,'#ffc000'],[8/11,'#55b03e'],[1/11,'#f0482c']];
  let a=0;
  return(
    <PlotSvg width="302" height="302" viewBox="1 0 302 302">
      {parts.map(([f,c],i)=>{const a0=a;a+=f*Math.PI*2;return <path key={i} d={arc(151,151,149.5,75.5,a0,a)} fill={c} stroke="#fff" strokeWidth="2.5"/>;})}
      <text x="212" y="63" fontSize="14.5" fill="#fff" textAnchor="middle">18%</text>
      <text x="120" y="49" fontSize="14.5" fill="#fff" textAnchor="middle">9%</text>
      <text x="120" y="265" fontSize="14.5" fill="#fff" textAnchor="middle">73%</text>
    </PlotSvg>
  );
};

export default function App(){
  return(
    <Page>
      <Global/>
      <TitleBar>
        <Circ/>
        <TitleRow>
          <AutoLabel>Autoguardado</AutoLabel>
          <Toggle><ToggleDot/></Toggle>
          <Slot $w={22} $ml={21}><Icons.Save/></Slot>
          <Slot $w={21} $ml={18}><Icons.Undo/></Slot>
          <Slot $w={22}><Chev c="#fff" s={8}/></Slot>
          <Slot $w={36}><Icons.Redo/></Slot>
          <Slot $w={10}><Chev c="#5d9b78" s={8}/></Slot>
          <Slot $w={48}><Icons.Custom/></Slot>
          <DocTitle>Planilha de Controle de Vendas 4.0 - Exemplo.xlsx&nbsp; -&nbsp; Ex...</DocTitle>
          <SearchBox><Icons.Search/><span>Buscar</span></SearchBox>
          <Slot $w={19} $ml={289}><Icons.Warn/></Slot>
          <UserName>Leandro Borges</UserName>
          <Avatar>LB</Avatar>
          <Slot $w={18} $ml={33}><Icons.Display/></Slot>
          <Slot $w={14} $ml={37}><Icons.Min/></Slot>
          <Slot $w={14} $ml={39}><Icons.Restore/></Slot>
          <Slot $w={14} $ml={38}><Icons.Close/></Slot>
        </TitleRow>
      </TitleBar>

      <TabsBar>
        {TABS.map(([t,w,on])=>(<RibbonTab key={t} $w={w} $on={on}>{t}{on&&<TabLine/>}</RibbonTab>))}
        <RibbonTab $w={146} $pl={18} $sel>Programador</RibbonTab>
        <RibbonTab $w={93} $pl={18.7}>MSP</RibbonTab>
        <RibbonTab $w={70}>Ayuda</RibbonTab>
        <ShareRow>
          <ShareBtn $w={128}><Icons.Share/>Compartir</ShareBtn>
          <ShareBtn $w={151}><Icons.Comment/>Comentarios</ShareBtn>
        </ShareRow>
      </TabsBar>

      <Ribbon>
        <Group $w={130}>
          <GroupBody>
            <PasteCol>
              <LargeBtn $w={63}>
                <LargeIcon $ml={3}><Icons.Paste/></LargeIcon>
                <span>Pegar</span>
                <TextRow><Chev/></TextRow>
              </LargeBtn>
            </PasteCol>
            <Col $pt={4}>
              <ToolRow $h={22} $mb={10}><Slot $w={24}><Icons.Scissors/></Slot></ToolRow>
              <ToolRow $h={24} $mb={9}><Slot $w={24}><Icons.Copy/></Slot><Slot $w={24}><Chev/></Slot></ToolRow>
              <ToolRow $h={22}><Slot $w={24}><Icons.Brush/></Slot></ToolRow>
            </Col>
          </GroupBody>
          <GroupLabel $left>Portapapeles<LaunchIcon c="#555"/></GroupLabel>
        </Group>

        <Group $w={301}>
          <GroupBody $pl={13}>
            <Col $pt={11}>
              <ToolRow $mb={12}>
                <SelectBox $w={148}>Calibri<Chev c="#444"/></SelectBox>
                <SelectBox $w={69}>14<Chev c="#444"/></SelectBox>
                <Slot $w={28}><BigA $s={25}>A</BigA><BigA $s={11}>ˆ</BigA></Slot>
                <Slot $w={34}><BigA $s={21}>A</BigA><BigA $s={11}>ˇ</BigA></Slot>
              </ToolRow>
              <ToolRow>
                <Slot $w={28}><BigA $s={19} $b $c>N</BigA></Slot>
                <Slot $w={30}><BigA $s={18} $i>K</BigA></Slot>
                <Slot $w={30}><BigA $s={18} $u>S</BigA></Slot>
                <Slot $w={20}><Chev c={GR}/></Slot>
                <Slot $w={12}><Sep $h={30}/></Slot>
                <Slot $w={25}><Icons.Borders/></Slot>
                <Slot $w={24}><Chev c={GR}/></Slot>
                <Slot $w={7}><Sep $h={30}/></Slot>
                <Slot $w={31}><Icons.Fill/></Slot>
                <Slot $w={16}><Chev c={GR}/></Slot>
                <Slot $w={36}><Icons.FontColor/></Slot>
                <Slot $w={14}><Chev c={GR}/></Slot>
              </ToolRow>
            </Col>
          </GroupBody>
          <GroupLabel $lp>Fuente<LaunchIcon c="#bbb"/></GroupLabel>
        </Group>

        <Group $w={392}>
          <GroupBody $pl={12}>
            <AlignLeft>
              <Col $pt={11}>
                <ToolRow $mb={12}>
                  <Slot $w={30}><AlignV pos="t"/></Slot><Slot $w={30}><AlignV pos="m"/></Slot><Slot $w={30}><AlignV pos="b"/></Slot>
                  <Slot $w={8}><Sep $h={30}/></Slot>
                  <Slot $w={30}><Icons.Orient/></Slot><Slot $w={12}><Chev c={GR}/></Slot>
                </ToolRow>
                <ToolRow>
                  <Slot $w={30}><AlignH pos="l"/></Slot><Slot $w={30}><AlignH pos="c"/></Slot><Slot $w={30}><AlignH pos="r"/></Slot>
                  <Slot $w={8}><Sep $h={30}/></Slot>
                  <Slot $w={30}><Indent dir="l"/></Slot><Slot $w={30}><Indent dir="r"/></Slot>
                </ToolRow>
              </Col>
            </AlignLeft>
            <VDiv/>
            <AlignRight>
              <Col $pt={11}>
                <ToolRow $mb={12}><Slot $w={26}><Icons.Wrap/></Slot><DimText>Ajustar texto</DimText></ToolRow>
                <ToolRow><Slot $w={26}><Icons.Merge/></Slot><DimText>Combinar y centrar</DimText><Slot $w={34}><Chev c={GR}/></Slot></ToolRow>
              </Col>
            </AlignRight>
          </GroupBody>
          <GroupLabel $lp>Alineación<LaunchIcon c="#bbb"/></GroupLabel>
        </Group>

        <Group $w={201}>
          <GroupBody $pl={12}>
            <Col $pt={11}>
              <ToolRow $mb={12}><SelectBox $w={178}><span/><Chev c="#bbb"/></SelectBox></ToolRow>
              <ToolRow>
                <Slot $w={31}><Icons.Accounting/></Slot><Slot $w={16}><Chev/></Slot>
                <Slot $w={33}><BigA $s={27}>%</BigA></Slot><Slot $w={30}><BigA $s={14}>000</BigA></Slot>
                <Slot $w={8}><Sep $h={30}/></Slot>
                <Slot $w={31}><Icons.DecInc/></Slot><Slot $w={30}><Icons.DecDec/></Slot>
              </ToolRow>
            </Col>
          </GroupBody>
          <GroupLabel $lp>Número<LaunchIcon c="#bbb"/></GroupLabel>
        </Group>

        <Group $w={304}>
          <GroupBody>
            <LargeBtn $w={127} $dim><LargeIcon><Icons.CondFmt/></LargeIcon><span>Formato</span><TextRow>condicional <Chev c={GR}/></TextRow></LargeBtn>
            <LargeBtn $w={80} $dim><LargeIcon><Icons.TableFmt/></LargeIcon><span>Dar formato</span><TextRow>como tabla <Chev c={GR}/></TextRow></LargeBtn>
            <LargeBtn $w={97} $dim><LargeIcon><Icons.CellFmt/></LargeIcon><span>Estilos de</span><TextRow>celda <Chev c={GR}/></TextRow></LargeBtn>
          </GroupBody>
          <GroupLabel>Estilos</GroupLabel>
        </Group>

        <Group $w={140}>
          <GroupBody $pl={16}>
            <Col>
              <ToolRow><Icons.CellIns/><Slot $w={4}/><DimText>Insertar</DimText><Slot $w={28}><Chev/></Slot></ToolRow>
              <ToolRow><Icons.CellDel/><Slot $w={4}/><DimText>Eliminar</DimText><Slot $w={28}><Chev/></Slot></ToolRow>
              <ToolRow><Icons.CellFormat/><Slot $w={4}/><DimText $on>Formato</DimText><Slot $w={18}><Chev/></Slot></ToolRow>
            </Col>
          </GroupBody>
          <GroupLabel>Celdas</GroupLabel>
        </Group>

        <Group $w={256}>
          <GroupBody $pl={17}>
            <Col $w={50}>
              <ToolRow><Slot $w={22}><Icons.Sum/></Slot><Slot $w={22}><Chev/></Slot></ToolRow>
              <ToolRow><Slot $w={22}><Icons.FillDown/></Slot><Slot $w={20}><Chev/></Slot></ToolRow>
              <ToolRow><Slot $w={22}><Icons.Eraser/></Slot><Slot $w={20}><Chev/></Slot></ToolRow>
            </Col>
            <LargeBtn $w={72}><LargeIcon><Icons.Sort/></LargeIcon><span>Ordenar y</span><TextRow>filtrar <Chev/></TextRow></LargeBtn>
            <LargeBtn $w={110}><LargeIcon><Icons.Find/></LargeIcon><span>Buscar y</span><TextRow>seleccionar <Chev/></TextRow></LargeBtn>
          </GroupBody>
          <GroupLabel>Edición</GroupLabel>
        </Group>

        <Group $w={78}>
          <GroupBody><LargeBtn $w={78} $dim><LargeIcon><Icons.Bolt/></LargeIcon><span>Ideas</span></LargeBtn></GroupBody>
          <GroupLabel>Ideas</GroupLabel>
        </Group>

        <Group $w={151}>
          <GroupBody><LargeBtn $w={151} $dim><LargeIcon><Icons.Conf/></LargeIcon><span>Confidencialidad</span><TextRow><Chev c={GR}/></TextRow></LargeBtn></GroupBody>
          <GroupLabel>Confidencialidad</GroupLabel>
        </Group>

        <Collapse><svg width="15" height="9" viewBox="0 0 15 9"><path d="M1 8l6.5-6.5L14 8" fill="none" stroke="#444" strokeWidth="1.3"/></svg></Collapse>
      </Ribbon>

      <FormulaBar>
        <NameBox>A1<Tri d="d" c="#8a8a8a" s={10}/></NameBox>
        <Dots><Dot/><Dot/><Dot/></Dots>
        <FxBox>
          <Slot $w={50}><svg width="14" height="14" viewBox="0 0 14 14"><path d="M1 1l12 12M13 1L1 13" stroke="#b8b8b8" strokeWidth="1.5"/></svg></Slot>
          <Slot $w={48}><svg width="16" height="16" viewBox="0 0 16 16"><path d="M2 9l4 5L14 1" fill="none" stroke="#b8b8b8" strokeWidth="2"/></svg></Slot>
          <Slot $w={48}><FxText>fx</FxText></Slot>
        </FxBox>
        <FormulaInput><svg width="14" height="9" viewBox="0 0 14 9"><path d="M1 1l6 6 6-6" fill="none" stroke="#555" strokeWidth="2"/></svg></FormulaInput>
      </FormulaBar>

      <Sheet>
        <SheetMain>
          <ColHeader>
            <Corner><svg width="24" height="22" viewBox="0 0 24 22"><path d="M24 0v22H0z" fill="#b4b4b4"/></svg></Corner>
            {COLS.map(([c,w,on])=><ColCell key={c} $w={w} $on={on}>{c}</ColCell>)}
          </ColHeader>
          <SheetBody>
            <RowHeader>
              {ROWS.map(([n,h,on])=><RowCell key={n} $h={h} $on={on}>{n}</RowCell>)}
            </RowHeader>
            <Content>
              <Nav>
                <LogoSlot><Bulb/><LogoLuz>LUZ</LogoLuz><LogoBar/><LogoSmall>Planilhas<br/>Empresariais</LogoSmall></LogoSlot>
                <NavItem $w={123}>CADASTRO</NavItem>
                <NavItem $w={174}>{'CONTROLE\nDE VENDAS'}</NavItem>
                <NavItem $w={123}>METAS</NavItem>
                <NavItem $w={151} $ml={13}>RELATÓRIOS</NavItem>
                <NavItem $w={149} $on>DASHBOARDS</NavItem>
                <NavItem $w={154}>INSTRUÇÕES</NavItem>
              </Nav>
              <SubNav>
                <SubTab $w={179} $on>GERAL</SubTab>
                <SubTab $w={220}>META X REALIZADO</SubTab>
                <SubTab $w={213}>DETALHAMENTO</SubTab>
              </SubNav>
              <Dash>
                <LeftCol>
                  <Heading $h={51} $pl={18} $pt={11}>Valores Negociados</Heading>
                  <Kpi $c="#ffc000">R$ 33.913</Kpi>
                  <Heading $h={51} $pl={18} $pt={11}>Valores Vendidos</Heading>
                  <Kpi $c="#55b03e">R$ 29.268</Kpi>
                  <Heading $h={51} $pl={18} $pt={11}>Vendas</Heading>
                  <Kpi $c="#6598cc">8</Kpi>
                  <Heading $h={51} $pl={18} $pt={11}>Ticket Médio</Heading>
                  <Kpi $c="#808080">R$ 3.658</Kpi>
                </LeftCol>
                <MidCol>
                  <Heading $h={47} $pl={29} $pt={11}>Valores Vendidos</Heading>
                  <ChartCard $h={238} $pt={16}>
                    <Chart w={1103} plotH={178} values={SOLD} labels={SOLDL} max={10000} color="#55b03e" barMaxH={147}/>
                  </ChartCard>
                  <Heading $h={51} $pl={29} $pt={13}>Vendas Realizadas</Heading>
                  <ChartCard $h={238} $pt={21}>
                    <Chart w={1102} plotH={181} values={COUNT} labels={COUNT} max={1} color="#6598cc" barMaxH={150}/>
                  </ChartCard>
                </MidCol>
                <RightCol>
                  <Heading $h={51} $pt={11}>Status das Vendas</Heading>
                  <StatusPanel>
                    <Donut/>
                    <Legend>
                      <LegendItem $mr={17}><LegendSwatch $c="#ffc000"/>Negociando</LegendItem>
                      <LegendItem $mr={20}><LegendSwatch $c="#55b03e"/>Finalizada</LegendItem>
                      <LegendItem><LegendSwatch $c="#f0482c"/>Perdida</LegendItem>
                    </Legend>
                  </StatusPanel>
                </RightCol>
              </Dash>
            </Content>
            <SelectedCell><Handle/></SelectedCell>
          </SheetBody>
        </SheetMain>
        <VScroll>
          <ScrollBtn><Tri d="u" c="#666" s={10}/></ScrollBtn>
          <ScrollThumb/>
          <ScrollBtn $auto $h={20}><Tri d="d" c="#666" s={10}/></ScrollBtn>
        </VScroll>
      </Sheet>

      <SheetTabs>
        <TabNav><Tri d="l" c="#c0c0c0" s={10}/><Tri d="r" c="#c0c0c0" s={10}/></TabNav>
        {SHEETS.map(([t,w,on],i)=><SheetTab key={t} $w={w} $on={on} $first={i===0}>{t}</SheetTab>)}
        <AddSheet><svg width="10" height="10" viewBox="0 0 10 10"><path d="M5 0v10M0 5h10" stroke="#6e6e6e" strokeWidth="1.8"/></svg></AddSheet>
        <HScrollWrap>
          <HDots><Dot/><Dot/><Dot/></HDots>
          <HScroll>
            <HArrow $w={23}><Tri d="l" c="#555" s={10}/></HArrow>
            <HThumb/>
            <HArrow $w={21} $auto><Tri d="r" c="#555" s={10}/></HArrow>
          </HScroll>
        </HScrollWrap>
      </SheetTabs>

      <StatusBar>
        <Macro/>
        <StatusRight>
          <ViewBtn $w={55} $on><GridView/></ViewBtn>
          <ViewBtn $w={55}><PageView/></ViewBtn>
          <ViewBtn $w={52}><BreakView/></ViewBtn>
          <ZoomSign $ml={12}>−</ZoomSign>
          <ZoomTrack><ZoomKnob/></ZoomTrack>
          <ZoomSign>+</ZoomSign>
          <ZoomPct>100%</ZoomPct>
        </StatusRight>
      </StatusBar>
      <Taskbar>
        <TaskItem $w={470} $ml={65} $c="#f3f3f3"/>
        <TaskItem $w={65} $ml={405} $c="#55646d"/>
      </Taskbar>
    </Page>
  );
}
